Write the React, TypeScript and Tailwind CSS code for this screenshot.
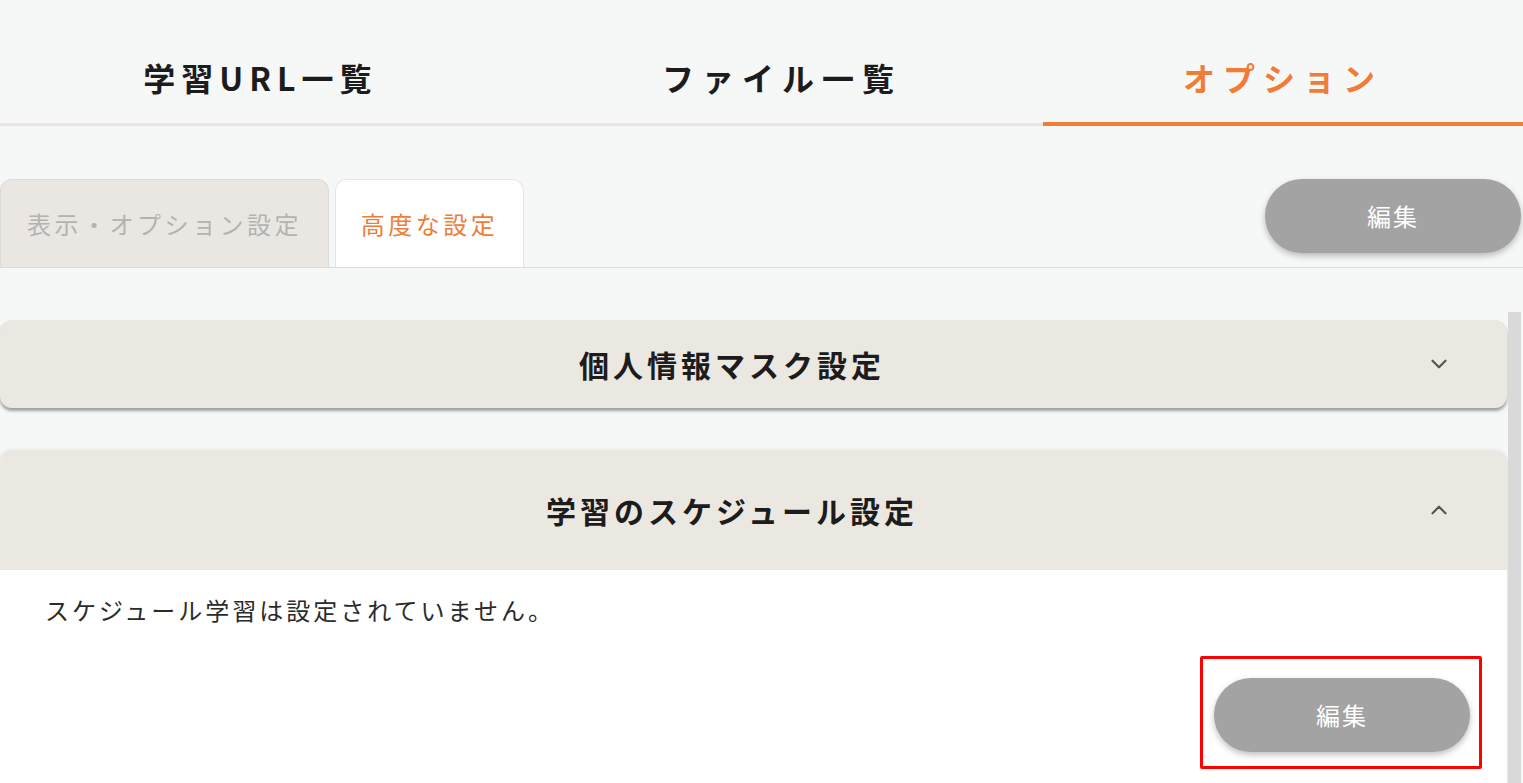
import { ChevronDown, ChevronUp } from 'lucide-react';

const jp = { fontFamily: '"Noto Sans CJK JP", "Noto Sans", sans-serif' };

const EditButton = ({ className }: { className?: string }) => (
  <button
    className={`h-[74px] w-[256px] rounded-full bg-[#a3a3a3] text-white text-[24px] tracking-[2px] shadow-[0_3px_6px_rgba(0,0,0,0.25)] ${className ?? ''}`}
  >
    編集
  </button>
);

export default function App() {
  return (
    <div style={jp} className="h-[783px] w-[1523px] overflow-hidden bg-[#f6f7f7] text-[#1c1c1c]">
      {/* Main tabs */}
      <div className="flex h-[126px] border-b-[3px] border-[#e9e6e0]">
        <div className="flex w-[521px] items-center justify-center pt-[30px] text-[32px] font-bold tracking-[6px]">
          学習URL一覧
        </div>
        <div className="flex w-[522px] items-center justify-center pt-[30px] text-[32px] font-bold tracking-[8px]">
          ファイル一覧
        </div>
        <div className="relative flex flex-1 items-center justify-center pt-[30px] text-[32px] font-bold tracking-[8px] text-[#f07c36]">
          オプション
          <div className="absolute bottom-[-3px] left-0 right-0 h-[4px] bg-[#f07c36]" />
        </div>
      </div>

      {/* Sub tabs */}
      <div className="mt-[53px] flex items-start border-b border-[#dcdcdc]">
        <div className="flex h-[88px] w-[329px] items-center justify-center rounded-t-[12px] border border-b-0 border-[#dedad4] bg-[#eae7e2] text-[24px] tracking-[3.5px] text-[#b3b3b3]">
          表示・オプション設定
        </div>
        <div className="ml-[6px] flex h-[88px] w-[189px] items-center justify-center rounded-t-[12px] border border-b-0 border-[#e6e6e6] bg-white text-[24px] tracking-[3.5px] text-[#f07c36]">
          高度な設定
        </div>
        <div className="flex-1" />
        <EditButton className="mr-[2px]" />
      </div>

      {/* Accordions */}
      <div className="flex">
        <div className="w-[1507px] pt-[52px]">
          <div className="flex h-[88px] items-center rounded-[12px] bg-[#ebe7e1] shadow-[0_3px_3px_rgba(0,0,0,0.35)]">
            <div className="flex-1 pl-[38px] text-center text-[30px] font-bold tracking-[4px]">個人情報マスク設定</div>
            <ChevronDown className="mr-[55px] h-[26px] w-[26px] text-[#555]" strokeWidth={2} />
          </div>

          <div className="mt-[42px] overflow-hidden rounded-t-[12px] bg-white shadow-[0_1px_4px_rgba(0,0,0,0.15)]">
            <div className="flex h-[120px] items-center bg-[#ebe7e1]">
              <div className="flex-1 pl-[38px] text-center text-[30px] font-bold tracking-[4px]">学習のスケジュール設定</div>
              <ChevronUp className="mr-[55px] h-[26px] w-[26px] text-[#555]" strokeWidth={2} />
            </div>
            <div className="pl-[45px] pr-[25px] pt-[22px] pb-[40px]">
              <p className="text-[24px] tracking-[3px] text-[#2b2b2b]">スケジュール学習は設定されていません。</p>
              <div className="mt-[28px] flex justify-end">
                <div className="rounded-[2px] border-[3px] border-[#ff0000] pl-[11px] pr-[9px] pt-[19px] pb-[14px]">
                  <EditButton />
                </div>
              </div>
            </div>
          </div>
        </div>
        <div className="ml-[1px] mt-[44px] h-[500px] w-[13px] bg-[#d9d9d9]" />
      </div>
    </div>
  );
}
